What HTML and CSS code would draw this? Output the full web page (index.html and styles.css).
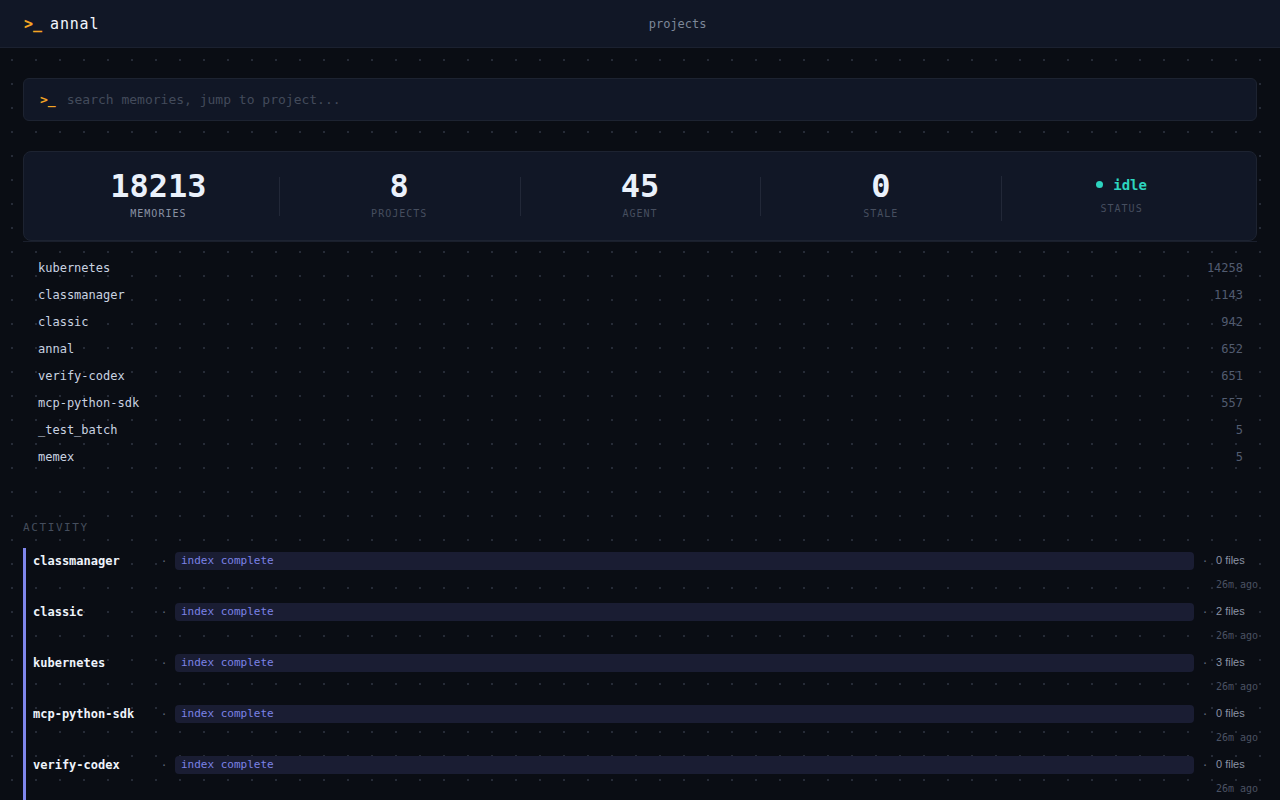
FILE: index.html
```html
<!DOCTYPE html>
<html lang="en">
<head>
<meta charset="utf-8">
<title>annal</title>
<link rel="stylesheet" href="styles.css">
</head>
<body>
<header class="topbar">
  <div class="logo"><span class="prompt">&gt;_</span><span class="brand">annal</span></div>
  <nav class="nav">projects</nav>
</header>
<main class="main">
  <div class="search">
    <span class="search-prompt">&gt;_</span>
    <span class="search-placeholder">search memories, jump to project...</span>
  </div>

  <section class="stats">
    <div class="stat"><div class="stat-num">18213</div><div class="stat-label active">MEMORIES</div></div>
    <div class="stat div"><div class="stat-num">8</div><div class="stat-label">PROJECTS</div></div>
    <div class="stat div"><div class="stat-num">45</div><div class="stat-label">AGENT</div></div>
    <div class="stat div"><div class="stat-num">0</div><div class="stat-label">STALE</div></div>
    <div class="stat div status"><div class="stat-status"><span class="status-dot"></span>idle</div><div class="stat-label">STATUS</div></div>
  </section>

  <ul class="projects">
    <li class="project"><span class="pname">kubernetes</span><span class="pcount">14258</span></li>
    <li class="project"><span class="pname">classmanager</span><span class="pcount">1143</span></li>
    <li class="project"><span class="pname">classic</span><span class="pcount">942</span></li>
    <li class="project"><span class="pname">annal</span><span class="pcount">652</span></li>
    <li class="project"><span class="pname">verify-codex</span><span class="pcount">651</span></li>
    <li class="project"><span class="pname">mcp-python-sdk</span><span class="pcount">557</span></li>
    <li class="project"><span class="pname">_test_batch</span><span class="pcount">5</span></li>
    <li class="project"><span class="pname">memex</span><span class="pcount">5</span></li>
  </ul>

  <h2 class="section-title">ACTIVITY</h2>
  <ul class="activity">
    <li class="act">
      <div class="act-row"><span class="act-name">classmanager</span><span class="sep">·</span><span class="badge">index complete</span><span class="sep">·</span><span class="act-meta">0 files</span></div>
      <div class="act-time"><span>26m ago</span></div>
    </li>
    <li class="act">
      <div class="act-row"><span class="act-name">classic</span><span class="sep">·</span><span class="badge">index complete</span><span class="sep">·</span><span class="act-meta">2 files</span></div>
      <div class="act-time"><span>26m ago</span></div>
    </li>
    <li class="act">
      <div class="act-row"><span class="act-name">kubernetes</span><span class="sep">·</span><span class="badge">index complete</span><span class="sep">·</span><span class="act-meta">3 files</span></div>
      <div class="act-time"><span>26m ago</span></div>
    </li>
    <li class="act">
      <div class="act-row"><span class="act-name">mcp-python-sdk</span><span class="sep">·</span><span class="badge">index complete</span><span class="sep">·</span><span class="act-meta">0 files</span></div>
      <div class="act-time"><span>26m ago</span></div>
    </li>
    <li class="act">
      <div class="act-row"><span class="act-name">verify-codex</span><span class="sep">·</span><span class="badge">index complete</span><span class="sep">·</span><span class="act-meta">0 files</span></div>
      <div class="act-time"><span>26m ago</span></div>
    </li>
  </ul>
</main>
</body>
</html>
```

FILE: styles.css
```css
* { box-sizing: border-box; }
html, body { margin: 0; padding: 0; }
body {
  background-color: #0a0d14;
  background-image: radial-gradient(circle at 12px 12px, #262b37 0.9px, transparent 1.4px);
  background-size: 24px 24px;
  color: #e6edf7;
  font-family: "DejaVu Sans Mono", "Liberation Mono", monospace;
  font-size: 12px;
}
ul { list-style: none; margin: 0; padding: 0; }

.topbar {
  height: 48px;
  background: #111726;
  border-bottom: 1px solid #1b2130;
  display: flex;
  align-items: center;
  padding: 0 24px;
}
.logo { display: flex; align-items: center; gap: 8px; font-size: 15px; }
.prompt { color: #f5a524; font-weight: 600; }
.brand { color: #f1f5fc; letter-spacing: 0.8px; font-weight: 500; }
.nav { flex: 1; text-align: center; color: #7d8799; font-size: 12px; }

.main { padding: 30px 23px 0; }

.search {
  height: 43px;
  background: #111726;
  border: 1px solid #1d2331;
  border-radius: 6px;
  display: flex;
  align-items: center;
  padding: 0 16px;
  gap: 11px;
  font-size: 13px;
}
.search-prompt { color: #f5a524; font-weight: 700; }
.search-placeholder { color: #434b5b; }

.stats {
  margin-top: 30px;
  background: #111726;
  border: 1px solid #1d2331;
  border-radius: 8px;
  padding: 18px 14px 20px;
  display: grid;
  grid-template-columns: repeat(5, 1fr);
  align-items: center;
}
.stat {
  position: relative;
  display: flex;
  flex-direction: column;
  align-items: center;
  gap: 6px;
}
.stat.div::before {
  content: "";
  position: absolute;
  left: 0;
  top: 7px;
  bottom: 4px;
  width: 1px;
  background: #222838;
}
.stat.status { gap: 9px; }
.stat.status::before { top: 0; bottom: -6px; }
.stat-num { font-size: 32px; line-height: 32px; font-weight: 600; color: #eaf1fb; }
.stat-label { font-size: 10px; line-height: 12px; letter-spacing: 1px; color: #464e5f; }
.stat-label.active { color: #8891a3; }
.stat-status {
  display: flex;
  align-items: center;
  gap: 10px;
  font-size: 14px;
  line-height: 18px;
  font-weight: 600;
  color: #2dd4bf;
}
.status-dot { width: 7px; height: 7px; border-radius: 50%; background: #2dd4bf; }

.projects {
  border-top: 1px solid #1a1f2c;
  padding: 12px 14px 0 15px;
}
.project {
  height: 27px;
  display: flex;
  align-items: center;
  justify-content: space-between;
}
.pname { color: #c9d2e1; }
.pcount { color: #525c70; }

.section-title {
  margin: 51px 0 13px;
  font-size: 11px;
  line-height: 14px;
  font-weight: 400;
  letter-spacing: 1.6px;
  color: #454d5d;
}

.activity { border-left: 3px solid #7f86ec; padding-left: 7px; }
.act { padding: 4px 0 7px; }
.act-row { display: flex; align-items: center; height: 18px; }
.act-name { width: 120px; flex-shrink: 0; color: #eef3fb; font-weight: 700; }
.sep { width: 22px; flex-shrink: 0; text-align: center; color: #5b6476; font-size: 11px; }
.badge {
  flex: 1;
  height: 18px;
  line-height: 17px;
  background: #1a1d33;
  border-radius: 4px;
  padding-left: 6px;
  color: #7b82e6;
  font-size: 11px;
}
.act-meta {
  width: 41px;
  flex-shrink: 0;
  font-family: "Liberation Sans", Arial, sans-serif;
  font-size: 11px;
  line-height: 14px;
  margin-top: -3px;
  color: #8a92a4;
}
.act-time {
  margin-top: 8px;
  height: 14px;
  display: flex;
  justify-content: flex-end;
}
.act-time span {
  width: 41px;
  white-space: nowrap;
  font-size: 10px;
  line-height: 14px;
  color: #4a5263;
}
```
